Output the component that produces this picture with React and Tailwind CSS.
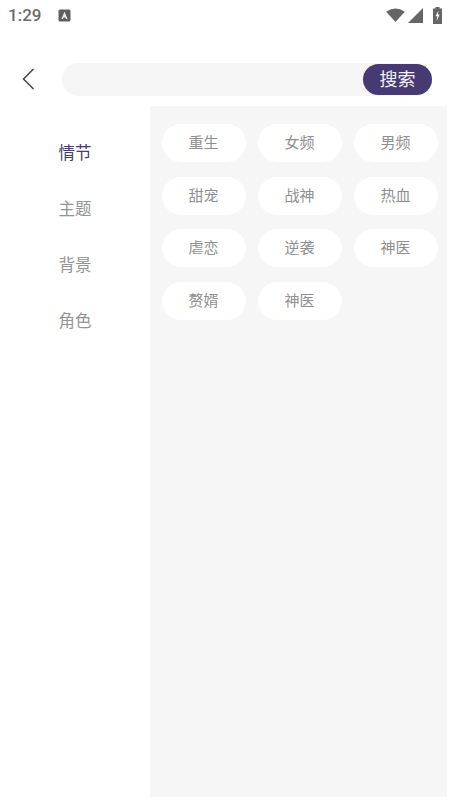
import React from "react";

const font = { fontFamily: '"Roboto", "Noto Sans CJK SC", sans-serif' };
const cats = ["情节", "主题", "背景", "角色"];
const tags = ["重生", "女频", "男频", "甜宠", "战神", "热血", "虐恋", "逆袭", "神医", "赘婿", "神医"];

export default function App() {
  return (
    <div className="w-[450px] h-[800px] bg-white flex flex-col overflow-hidden" style={font}>
      <div className="h-[30px] flex items-center justify-between pl-2 pr-[7px] shrink-0">
        <div className="flex items-center gap-[17px]">
          <span className="text-[17px] text-[#6b6b6b] font-medium leading-none">1:29</span>
          <svg width="13" height="13" viewBox="0 0 13 13">
            <rect x="0.5" y="0.5" width="12" height="12" rx="1.5" fill="#5f5f5f" />
            <path d="M6.5 2.8 L9.6 10 H8.1 L7.5 8.4 H5.5 L4.9 10 H3.4 Z" fill="#eee" />
          </svg>
        </div>
        <div className="flex items-center gap-[3px]">
          <svg width="19" height="14" viewBox="0 0 20 15">
            <path d="M0 4 Q10 -3 20 4 L10 15 Z" fill="#666" />
          </svg>
          <svg width="15" height="15" viewBox="0 0 15 15">
            <path d="M15 0 V15 H0 Z" fill="#666" />
          </svg>
          <svg width="11" height="17" viewBox="0 0 11 17" className="ml-[6px]">
            <path d="M3.5 0 H7.5 V1.5 H10 V17 H1 V1.5 H3.5 Z" fill="#666" />
            <path d="M6.4 3.5 L3.6 9.3 H5.3 L4.6 14 L7.6 7.6 H5.8 Z" fill="#fff" />
          </svg>
        </div>
      </div>

      <div className="h-[76px] flex items-start pl-[22px] pr-[18px] shrink-0 pt-[33px]">
        <svg width="12" height="22" viewBox="0 0 12 22" fill="none" className="shrink-0 mt-[5px]">
          <path d="M11.5 1 L1.5 11 L11.5 21" stroke="#444" strokeWidth="1.5" />
        </svg>
        <div className="ml-[28px] flex-1 h-[33px] rounded-full bg-[#f5f5f5] flex items-center justify-end">
          <div className="w-[69px] h-[31px] rounded-full bg-[#473a72] text-[#f3f1f7] text-[18px] flex items-center justify-center leading-none">
            搜索
          </div>
        </div>
      </div>

      <div className="flex flex-1 min-h-0 pb-[3px] pr-[3px]">
        <div className="w-[150px] shrink-0 flex flex-col items-center pt-[34px] gap-[28px]">
          {cats.map((c, i) => (
            <div
              key={c}
              className={`h-[28px] flex items-center text-[16.5px] leading-none ${i === 0 ? "text-[#473a72]" : "text-[#949494]"}`}
            >
              {c}
            </div>
          ))}
        </div>
        <div className="flex-1 bg-[#f6f6f6] pt-[18px] pl-[12px] pr-[9px]">
          <div className="grid grid-cols-3 gap-x-[12px] gap-y-[14.5px]">
            {tags.map((t, i) => (
              <div
                key={i}
                className="h-[38px] rounded-full bg-white flex items-center justify-center text-[15px] text-[#8f8f8f] leading-none pt-[1px] pr-[1px]"
              >
                {t}
              </div>
            ))}
          </div>
        </div>
      </div>
    </div>
  );
}
